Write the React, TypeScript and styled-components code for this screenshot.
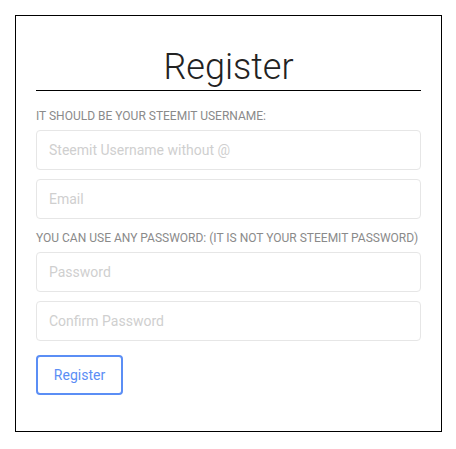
import * as React from 'react'
import styled, { createGlobalStyle } from 'styled-components'

const GlobalStyle = createGlobalStyle`
	body {
		margin: 0;
		background: #fff;
		font-family: Roboto, "Liberation Sans", sans-serif;
	}
`

export default function App() {
	return (
		<Page>
			<GlobalStyle />
			<Card>
				<Title>Register</Title>
				<Hint>It should be your steemit username:</Hint>
				<Field placeholder="Steemit Username without @" />
				<Field placeholder="Email" />
				<Hint>You can use any password: (it is not your steemit password)</Hint>
				<Field type="password" placeholder="Password" />
				<Field type="password" placeholder="Confirm Password" />
				<RegisterButton>Register</RegisterButton>
			</Card>
		</Page>
	)
}

const Page = styled.div`
	padding: 15px;
`

const Card = styled.form`
	box-sizing: border-box;
	width: 427px;
	height: 417px;
	border: 1px solid #000;
	padding: 29px 20px 0;
	display: flex;
	flex-direction: column;
`

const Title = styled.h1`
	margin: 0 0 15px;
	font-weight: 300;
	font-size: 36px;
	line-height: 45px;
	color: #222;
	text-align: center;
	border-bottom: 1px solid #000;
`

const Hint = styled.div`
	font-size: 12px;
	line-height: 14px;
	color: #8a8a8a;
	text-transform: uppercase;
	margin: 3px 0 7px;
`

const Field = styled.input`
	box-sizing: border-box;
	height: 40px;
	width: 100%;
	border: 1px solid #e6e6e6;
	border-radius: 4px;
	padding: 0 12px;
	font-family: Roboto, "Liberation Sans", sans-serif;
	font-size: 14px;
	margin-bottom: 9px;
	outline: none;
	&::placeholder {
		color: #cfcfcf;
	}
`

const RegisterButton = styled.button`
	align-self: flex-start;
	box-sizing: border-box;
	margin-top: 5px;
	height: 40px;
	width: 87px;
	border: 2px solid #5b8ef5;
	border-radius: 4px;
	background: #fff;
	color: #5b8ef5;
	font-family: Roboto, "Liberation Sans", sans-serif;
	font-size: 14px;
`
